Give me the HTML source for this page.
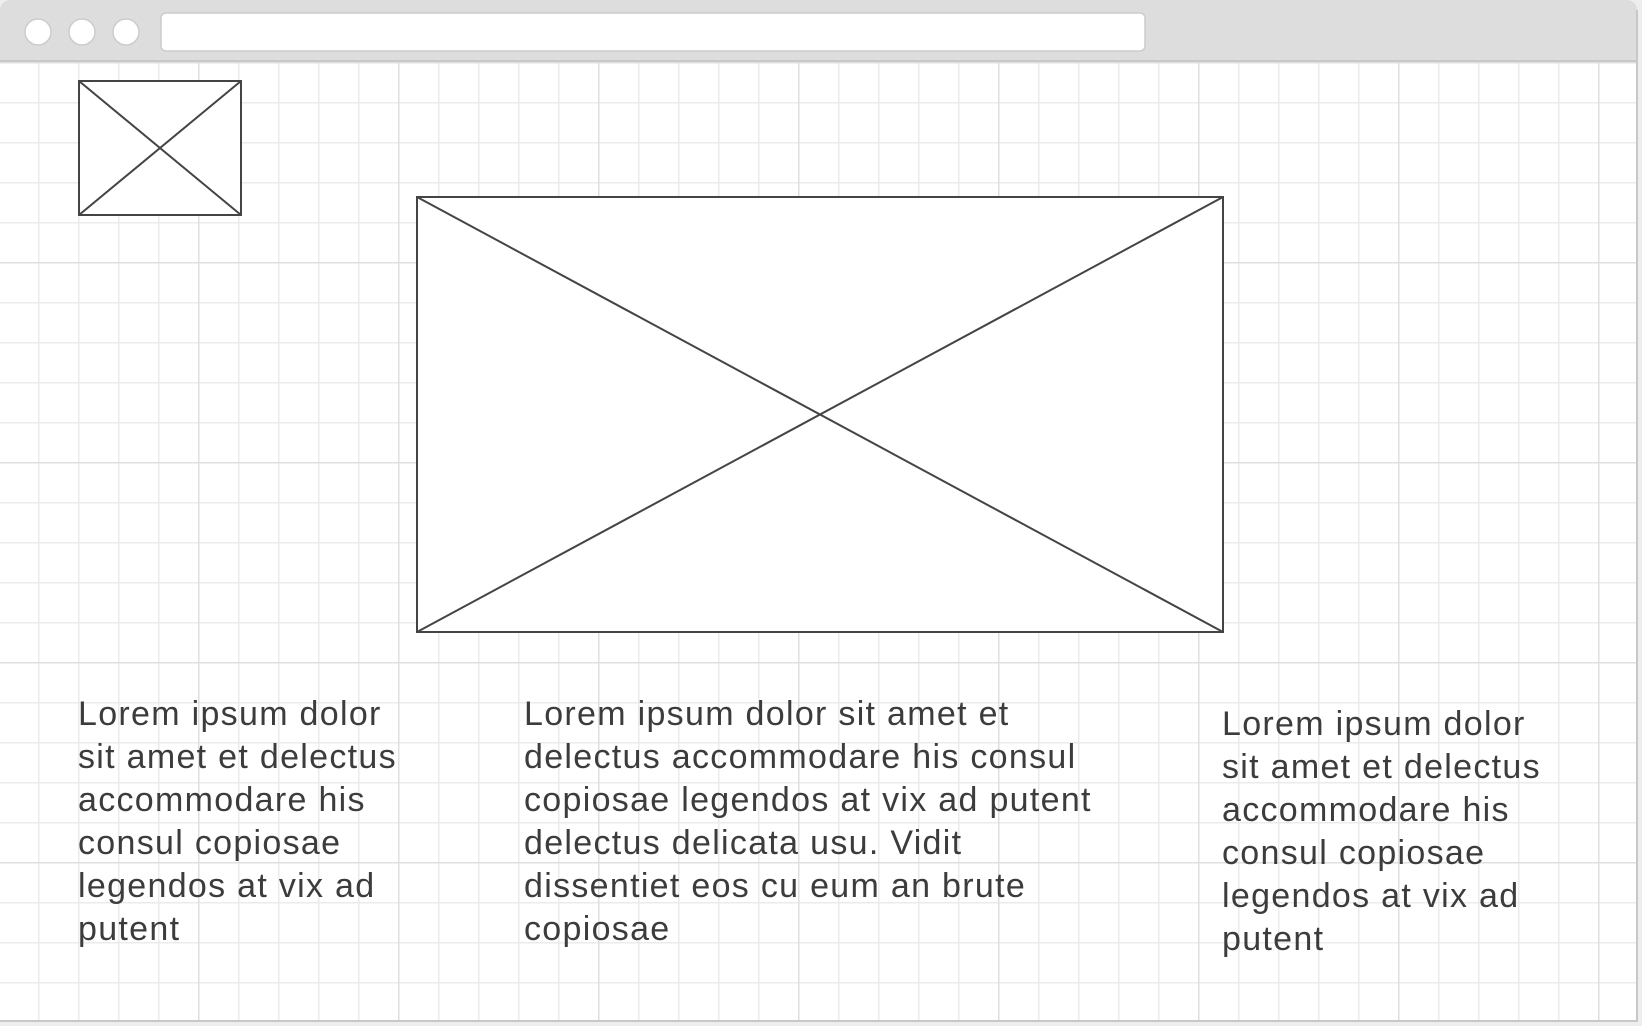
<!DOCTYPE html>
<html><head><meta charset="utf-8"><style>
html,body{margin:0;padding:0;width:1642px;height:1026px;overflow:hidden;background:#eeeeee;font-family:"Liberation Sans",Arial,sans-serif}
svg{position:absolute;left:0;top:0}
.t{position:absolute;font-size:34px;letter-spacing:1.3px;line-height:43px;color:#3c3c3c;white-space:nowrap}
</style></head><body>
<svg width="1642" height="1026" viewBox="0 0 1642 1026">
<defs>
<pattern id="minor" x="38" y="62" width="40" height="40" patternUnits="userSpaceOnUse">
<path d="M0 0V40M0 0H40" stroke="#ebebeb" stroke-width="3" fill="none"/>
</pattern>
<pattern id="major" x="198" y="62" width="200" height="200" patternUnits="userSpaceOnUse">
<path d="M0 0V200M0 0H200" stroke="#dfdfdf" stroke-width="3" fill="none"/>
</pattern>
</defs>
<rect x="0" y="0" width="1637" height="1021" rx="10" fill="#dddddd"/>
<rect x="0" y="62" width="1637" height="959" fill="#fff"/>
<rect x="0" y="62" width="1637" height="959" fill="url(#minor)"/>
<rect x="0" y="62" width="1637" height="959" fill="url(#major)"/>
<line x1="0" y1="61" x2="1637" y2="61" stroke="#c8c8c8" stroke-width="2"/>
<line x1="0" y1="1021" x2="1637" y2="1021" stroke="#c8c8c8" stroke-width="2"/>
<line x1="1637" y1="10" x2="1637" y2="1022" stroke="#c8c8c8" stroke-width="2"/>
<circle cx="38" cy="32" r="13" fill="#fff" stroke="#cccccc" stroke-width="1.5"/>
<circle cx="82" cy="32" r="13" fill="#fff" stroke="#cccccc" stroke-width="1.5"/>
<circle cx="126" cy="32" r="13" fill="#fff" stroke="#cccccc" stroke-width="1.5"/>
<rect x="161" y="13" width="984" height="38" rx="5" fill="#fff" stroke="#cccccc" stroke-width="1.5"/>
<g stroke="#444" stroke-width="2" fill="#fff">
<rect x="79" y="81" width="162" height="134"/>
<path d="M79 81L241 215M241 81L79 215" fill="none"/>
<rect x="417" y="197" width="806" height="435"/>
<path d="M417 197L1223 632M1223 197L417 632" fill="none"/>
</g>
</svg>
<div class="t" style="left:78px;top:693px">Lorem ipsum dolor<br>sit amet et delectus<br>accommodare his<br>consul copiosae<br>legendos at vix ad<br>putent</div>
<div class="t" style="left:524px;top:693px">Lorem ipsum dolor sit amet et<br>delectus accommodare his consul<br>copiosae legendos at vix ad putent<br>delectus delicata usu. Vidit<br>dissentiet eos cu eum an brute<br>copiosae</div>
<div class="t" style="left:1222px;top:703px">Lorem ipsum dolor<br>sit amet et delectus<br>accommodare his<br>consul copiosae<br>legendos at vix ad<br>putent</div>
</body></html>
